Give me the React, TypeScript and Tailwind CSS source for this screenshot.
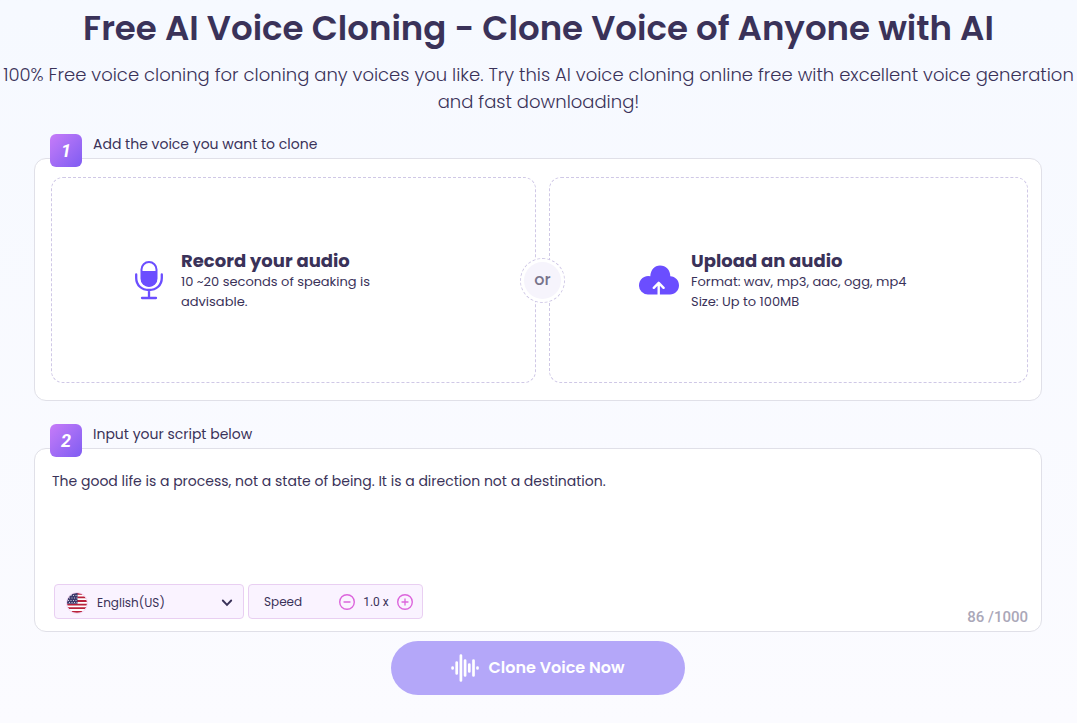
import { useState } from "react";
import type { ReactNode } from "react";

function Microphone() {
  return (
    <svg width="28" height="40" viewBox="0 0 28 40" fill="none" aria-hidden="true" className="shrink-0">
      <rect x="6.500" y="2" width="15" height="24" rx="7.500" stroke="#6b4eff" strokeWidth="2" />
      <path d="M6 11h16v7.500a8 8 0 0 1-16 0z" fill="#6b4eff" />
      <path d="M1.200 14.500v3.500c0 7.300 5.500 12 12.800 12s12.800-4.700 12.800-12v-3.500M14 30v8M7 38h14" stroke="#6b4eff" strokeWidth="2.300" strokeLinecap="round" />
    </svg>
  );
}

function CloudUpload() {
  return (
    <svg width="40" height="30" viewBox="0 0 40 30" fill="none" aria-hidden="true" className="shrink-0">
      <path d="M9 29.500a9 9 0 0 1-9-9.300 9.200 9.200 0 0 1 11.300-9C11.600 5 15.500.500 21 .500c6 0 10.300 4.500 10.300 10.700C36.300 11.400 40 15.300 40 20.300c0 5.200-4 9.200-9 9.200z" fill="#6b4eff" />
      <path d="M19.700 30V19M14.800 22.800l4.900-5 4.900 5" stroke="#fff" strokeWidth="2.400" strokeLinecap="round" strokeLinejoin="round" />
    </svg>
  );
}

function Waveform() {
  return (
    <svg width="28" height="28" viewBox="0 0 28 28" aria-hidden="true" stroke="#fff" strokeWidth="2.700" strokeLinecap="round">
      <path d="M1.600 13.500v1M5.700 8.500v11M9.900 1.500v25M14.100 6.500v15M18.300 10.500v7M22.500 6.500v15M26.500 13.500v1" />
    </svg>
  );
}

function UsFlag() {
  return (
    <svg width="22" height="22" viewBox="0 0 22 22" aria-hidden="true" className="pointer-events-none absolute left-3 top-2">
      <defs>
        <clipPath id="flag-round">
          <circle cx="11" cy="11" r="10.300" />
        </clipPath>
      </defs>
      <g clipPath="url(#flag-round)">
        <path fill="#fff" d="M0 0h22v22H0z" />
        <path d="M0 1.800h22M0 5.400h22M0 9h22M0 12.600h22M0 16.200h22M0 19.800h22" stroke="#b9223c" strokeWidth="1.800" />
        <path fill="#3c3b6e" d="M0 0h11.500v11.700H0z" />
        <path d="M2 3.500h9M3 6h9M2 8.500h9M3 10.500h8" stroke="#fff" strokeWidth="1" strokeDasharray="1 1.500" opacity=".75" />
      </g>
      <circle cx="11" cy="11" r="10.500" fill="none" stroke="#f3d9f5" />
    </svg>
  );
}

function StepHeader({ step, children }: { step: number; children: ReactNode }) {
  return (
    <div className="relative z-10 -mb-[9px] flex h-[33px] items-start pl-4">
      <span className="flex h-[33px] w-8 items-center justify-center rounded-md bg-linear-to-br from-[#c77bf8] to-[#7f5cf2] font-[Roboto] text-lg font-bold italic text-white">
        {step}
      </span>
      <span className="pl-[11px] text-sm leading-5">{children}</span>
    </div>
  );
}

function SourceButton({ icon, title, lines, className }: { icon: ReactNode; title: string; lines: string[]; className: string }) {
  return (
    <button type="button" className={"flex h-[206px] items-center rounded-xl border border-dashed border-[#cfc8e6] text-left " + className}>
      {icon}
      <span className="block pt-0.5">
        <span className="block text-lg font-bold leading-[22px]">{title}</span>
        {lines.map((line) => (
          <span key={line} className="block whitespace-nowrap text-[13px] leading-5">{line}</span>
        ))}
      </span>
    </button>
  );
}

function SpeedButton({ label, path, onClick }: { label: string; path: string; onClick: () => void }) {
  return (
    <button type="button" aria-label={label} onClick={onClick}>
      <svg width="16" height="16" viewBox="0 0 16 16" fill="none" stroke="#dc65dc" aria-hidden="true">
        <circle cx="8" cy="8" r="7.300" strokeWidth="1.400" />
        <path d={path} strokeWidth="1.300" strokeLinecap="round" />
      </svg>
    </button>
  );
}

export default function App() {
  const [script, setScript] = useState(
    "The good life is a process, not a state of being. It is a direction not a destination."
  );
  const [speed, setSpeed] = useState(10);

  return (
    <main className="min-h-screen bg-linear-to-b from-[#f6f9ff] to-[#fbfbff] pb-7 font-[Poppins,Inter,sans-serif] text-[#3a3259]">
      <header className="pt-1 text-center">
        <h1 className="whitespace-nowrap text-[34px] font-semibold leading-12">
          Free AI Voice Cloning - Clone Voice of Anyone with AI
        </h1>
        <p className="pt-[9px] text-lg font-light leading-[27px]">
          <span className="block whitespace-nowrap">
            100% Free voice cloning for cloning any voices you like. Try this AI voice cloning online free with excellent voice generation
          </span>
          <span className="block">and fast downloading!</span>
        </p>
      </header>

      <div className="pl-[34px] pr-[35px] pt-[19px]">
        <section>
          <StepHeader step={1}>Add the voice you want to clone</StepHeader>
          <div className="grid grid-cols-[485fr_13px_479fr] rounded-xl border border-[#e0e0e8] bg-white pb-[17px] pl-4 pr-[13px] pt-[18px]">
            <SourceButton
              icon={<Microphone />}
              title="Record your audio"
              lines={["10 ~20 seconds of speaking is", "advisable."]}
              className="gap-[18px] pl-[83px]"
            />
            <div className="z-10 flex items-center justify-center">
              <span className="flex size-[45px] shrink-0 items-center justify-center rounded-full border border-dashed border-[#cfc8e6] bg-white">
                <span className="flex size-[37px] items-center justify-center rounded-full bg-[#f6f4fc] font-medium text-[#77738a]">or</span>
              </span>
            </div>
            <SourceButton
              icon={<CloudUpload />}
              title="Upload an audio"
              lines={["Format: wav, mp3, aac, ogg, mp4", "Size: Up to 100MB"]}
              className="gap-3 pl-[89px]"
            />
          </div>
        </section>

        <section className="pt-[23px]">
          <StepHeader step={2}>
            <label htmlFor="script">Input your script below</label>
          </StepHeader>
          <div className="rounded-xl border border-[#e0e0e8] bg-white">
            <textarea
              id="script"
              maxLength={1000}
              value={script}
              onChange={(event) => setScript(event.target.value)}
              className="block h-[135px] w-full resize-none px-[17px] pt-[22px] text-sm leading-5 outline-none"
            />
            <div className="flex items-start gap-1 pb-1 pl-[19px] pr-[13px]">
              <div className="relative">
                <UsFlag />
                <select
                  aria-label="Language"
                  className="h-[35px] w-[190px] appearance-none rounded-sm border border-[#e9cff2] bg-[#faf3ff] pl-[42px] pt-0.5 text-xs"
                >
                  <option>English(US)</option>
                </select>
                <svg width="12" height="8" viewBox="0 0 12 8" fill="none" aria-hidden="true" className="pointer-events-none absolute right-[11px] top-[15px]">
                  <path d="m1.800 1.500 4.200 4.300 4.200-4.300" stroke="#3a3259" strokeWidth="1.900" strokeLinecap="round" />
                </svg>
              </div>
              <div className="flex h-[35px] w-[175px] items-center rounded-sm border border-[#e9cff2] bg-[#faf3ff] pl-[15px] pr-[9px] text-xs">
                <span className="flex-1">Speed</span>
                <SpeedButton label="Decrease speed" path="M5 8h6" onClick={() => setSpeed(Math.max(5, speed - 1))} />
                <span className="w-[42px] text-center font-[Roboto]">{(speed / 10).toFixed(1)} x</span>
                <SpeedButton label="Increase speed" path="M5 8h6M8 5v6" onClick={() => setSpeed(Math.min(20, speed + 1))} />
              </div>
              <span className="ml-auto pt-[23px] font-[Roboto] text-[15px] font-medium leading-5 text-[#aaa7b8]">
                {script.length} /1000
              </span>
            </div>
          </div>
        </section>

        <button
          type="button"
          className="mx-auto mt-[9px] flex h-[54px] w-[294px] items-center justify-center gap-[9px] rounded-full bg-[#b4a7f9] font-semibold text-white"
        >
          <Waveform />
          Clone Voice Now
        </button>
      </div>
    </main>
  );
}
